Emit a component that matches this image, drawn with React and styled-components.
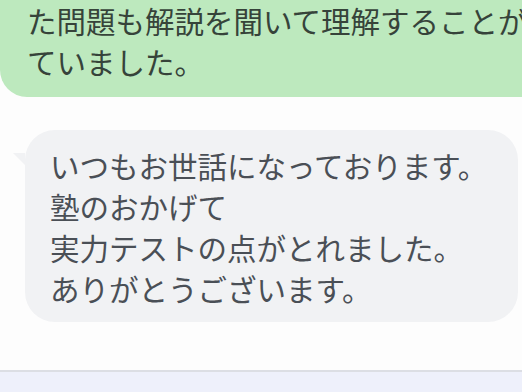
import styled, { createGlobalStyle } from "styled-components";

const GlobalStyle = createGlobalStyle`
  html, body {
    margin: 0;
    padding: 0;
    background: #fdfdfd;
    overflow: hidden;
  }
  body {
    font-family: "Noto Sans CJK JP", "Noto Sans", sans-serif;
  }
`;

const Page = styled.div`
  width: 522px;
  height: 392px;
  display: flex;
  flex-direction: column;
  overflow: hidden;
`;

const Chat = styled.div`
  flex: 1;
  display: flex;
  flex-direction: column;
  gap: 33px;
`;

const Bubble = styled.div`
  position: relative;
  font-size: 29.5px;
  line-height: 41px;
  letter-spacing: 0;
  white-space: nowrap;
  background: ${(p) => (p.$mine ? "#bde9be" : "#f1f2f4")};
  color: ${(p) => (p.$mine ? "#36433a" : "#4a4f56")};
`;

const SentBubble = styled(Bubble)`
  width: 600px;
  padding: 0 0 15px 27px;
  border-radius: 0 0 0 27px;
`;

const ReceivedBubble = styled(Bubble)`
  margin-left: 25px;
  width: 493px;
  box-sizing: border-box;
  padding: 15px 20px 13px 25px;
  border-radius: 30px;

  &::before {
    content: "";
    position: absolute;
    left: -12px;
    top: 23px;
    width: 0;
    height: 0;
    border-top: 12px solid #f1f2f4;
    border-left: 12px solid transparent;
  }
`;

const InputBar = styled.div`
  height: 20px;
  border-top: 2px solid #dcdee4;
  background: #eef0fb;
`;

export default function App() {
  return (
    <>
      <GlobalStyle />
      <Page>
        <Chat>
          <SentBubble $mine>
            た問題も解説を聞いて理解することができ
            <br />
            ていました。
          </SentBubble>
          <ReceivedBubble>
            いつもお世話になっております。
            <br />
            塾のおかげて
            <br />
            実力テストの点がとれました。
            <br />
            ありがとうございます。
          </ReceivedBubble>
        </Chat>
        <InputBar />
      </Page>
    </>
  );
}
